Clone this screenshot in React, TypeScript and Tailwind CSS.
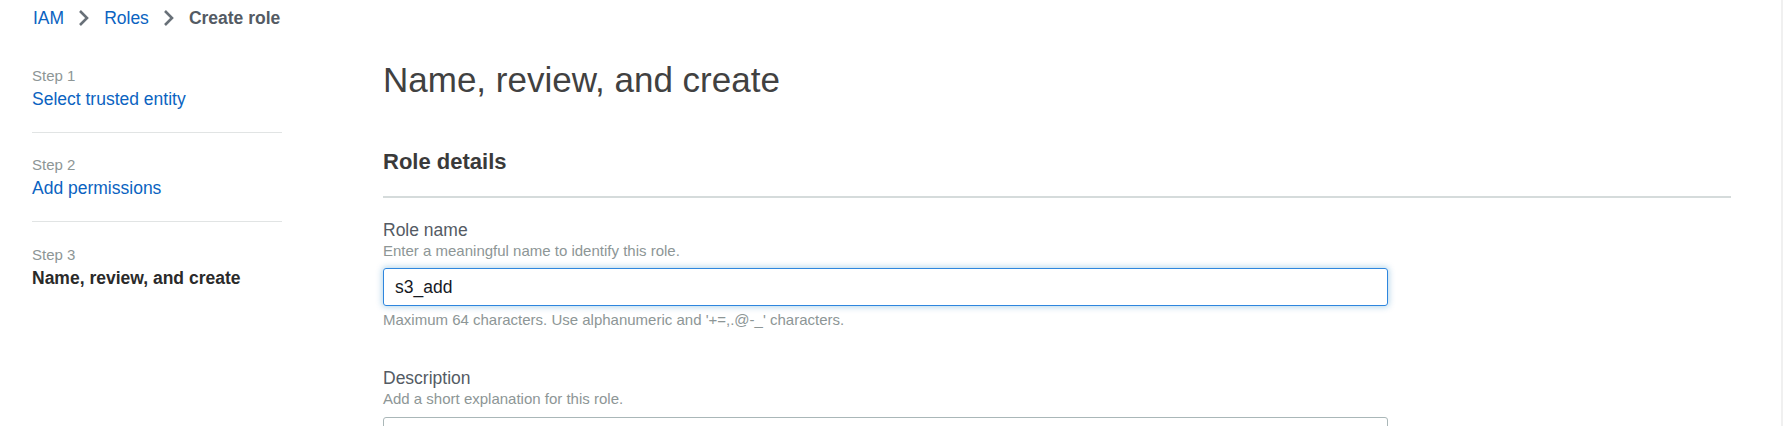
import React from 'react';

function Chevron() {
    return (
        <svg width="12" height="18" viewBox="0 0 12 18" className="mx-[14px]">
            <path d="M2 2l7 7-7 7" fill="none" stroke="#687078" strokeWidth="2.6" strokeLinecap="butt" />
        </svg>
    );
}

const steps = [
    { label: 'Step 1', title: 'Select trusted entity', active: false },
    { label: 'Step 2', title: 'Add permissions', active: false },
    { label: 'Step 3', title: 'Name, review, and create', active: true },
];

export default function App() {
    return (
        <div className="flex h-[426px] w-full overflow-hidden bg-white font-['Liberation_Sans',Arial,sans-serif]">
            <div className="flex-1">
                {/* Breadcrumbs */}
                <nav className="flex items-center pl-[33px] pt-[7px] text-[17.5px] leading-[22px]">
                    <span className="text-[#0b63c1]">IAM</span>
                    <Chevron />
                    <span className="text-[#0b63c1]">Roles</span>
                    <Chevron />
                    <span className="font-bold text-[#545b64]">Create role</span>
                </nav>

                <div className="flex">
                    {/* Steps */}
                    <aside className="ml-[32px] mt-[15px] w-[250px] shrink-0">
                        {steps.map((s, i) => (
                            <div
                                key={s.label}
                                className={
                                    i < steps.length - 1
                                        ? 'border-b border-[#e1e4e4] pt-[22px] pb-[22px]'
                                        : 'pt-[23px]'
                                }
                            >
                                <div className="text-[15px] leading-[20px] text-[#8d9696]">{s.label}</div>
                                <div
                                    className={
                                        s.active
                                            ? 'mt-[2px] text-[17.5px] leading-[22px] font-bold text-[#2a2a2a]'
                                            : 'mt-[2px] text-[17.5px] leading-[22px] text-[#0b63c1]'
                                    }
                                >
                                    {s.title}
                                </div>
                            </div>
                        ))}
                    </aside>

                    {/* Main */}
                    <main className="ml-[101px] w-[1348px] pt-[30px]">
                        <h1 className="text-[35px] leading-[42px] text-[#414141]">Name, review, and create</h1>

                        <h2 className="mt-[47px] text-[22px] leading-[28px] font-bold text-[#3a3a3a]">Role details</h2>
                        <div className="mt-[20px] border-t-2 border-[#d5dbdb]" />

                        <div className="mt-[21px]">
                            <div className="text-[17.5px] leading-[22px] text-[#545b64]">Role name</div>
                            <div className="text-[15px] leading-[20px] text-[#8d9696]">
                                Enter a meaningful name to identify this role.
                            </div>
                            <input
                                readOnly
                                value="s3_add"
                                className="mt-[7px] h-[38px] w-[1005px] rounded-[3px] border border-[#2e86de] px-[11px] text-[17.5px] text-[#16191f] shadow-[0_0_6px_1px_rgba(0,115,187,0.3)] outline-none"
                            />
                            <div className="mt-[4px] text-[15px] leading-[20px] text-[#8d9696]">
                                Maximum 64 characters. Use alphanumeric and '+=,.@-_' characters.
                            </div>
                        </div>

                        <div className="mt-[37px]">
                            <div className="text-[17.5px] leading-[22px] text-[#545b64]">Description</div>
                            <div className="text-[15px] leading-[20px] text-[#8d9696]">Add a short explanation for this role.</div>
                            <div className="mt-[8px] h-[38px] w-[1005px] rounded-[3px] border border-[#aab7b8]" />
                        </div>
                    </main>
                </div>
            </div>
            <div className="w-[2px] shrink-0 bg-[#f0f0f0]" />
        </div>
    );
}
